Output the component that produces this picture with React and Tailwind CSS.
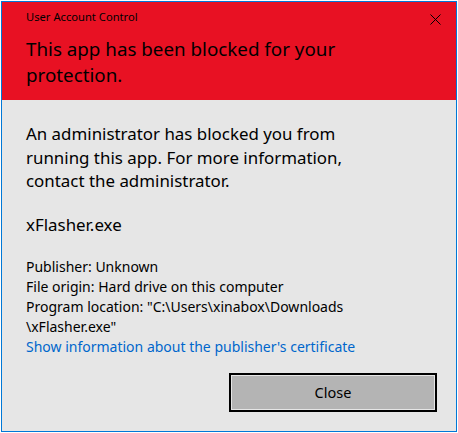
export default function App() {
  const font = { fontFamily: '"Noto Sans", "Open Sans", sans-serif' };
  return (
    <div className="w-[458px] h-[433px] bg-white pl-[1px] pt-[1px]" style={font}>
      <div className="w-[456px] h-[431px] border border-[#0078d7] bg-[#e6e6e6] flex flex-col text-black">
        <div className="h-[98px] bg-[#e81123] flex flex-col pl-[24px] pr-[15px] pt-[7px]">
          <div className="flex items-start justify-between">
            <div className="text-[11.2px] leading-[16px]">User Account Control</div>
            <svg width="11" height="11" viewBox="0 0 11 11" className="mt-[5px]" aria-hidden="true">
              <path d="M0.5 0.5 L10.5 10.5 M10.5 0.5 L0.5 10.5" stroke="#000" strokeWidth="1" fill="none" />
            </svg>
          </div>
          <div className="mt-[11px] text-[18.8px] leading-[26px] w-[330px]">
            This app has been blocked for your protection.
          </div>
        </div>
        <div className="flex flex-col pl-[24px] pt-[22px] flex-1">
          <div className="text-[16.9px] leading-[23.5px] w-[330px]">
            An administrator has blocked you from running this app. For more information, contact the administrator.
          </div>
          <div className="mt-[20px] text-[16.9px] leading-[23.5px]">xFlasher.exe</div>
          <div className="mt-[21px] text-[14px] leading-[20px]">
            <div>Publisher: Unknown</div>
            <div>File origin: Hard drive on this computer</div>
            <div>Program location: "C:\Users\xinabox\Downloads</div>
            <div>\xFlasher.exe"</div>
            <div className="text-[#0066cc]">Show information about the publisher's certificate</div>
          </div>
          <div className="flex justify-end pr-[19px] mt-[16px]">
            <button className="w-[208px] h-[39px] border-2 border-black p-[1px] bg-transparent">
              <div className="w-full h-full bg-[#b4b4b4] flex items-center justify-center text-[14.5px]">Close</div>
            </button>
          </div>
        </div>
      </div>
    </div>
  );
}
